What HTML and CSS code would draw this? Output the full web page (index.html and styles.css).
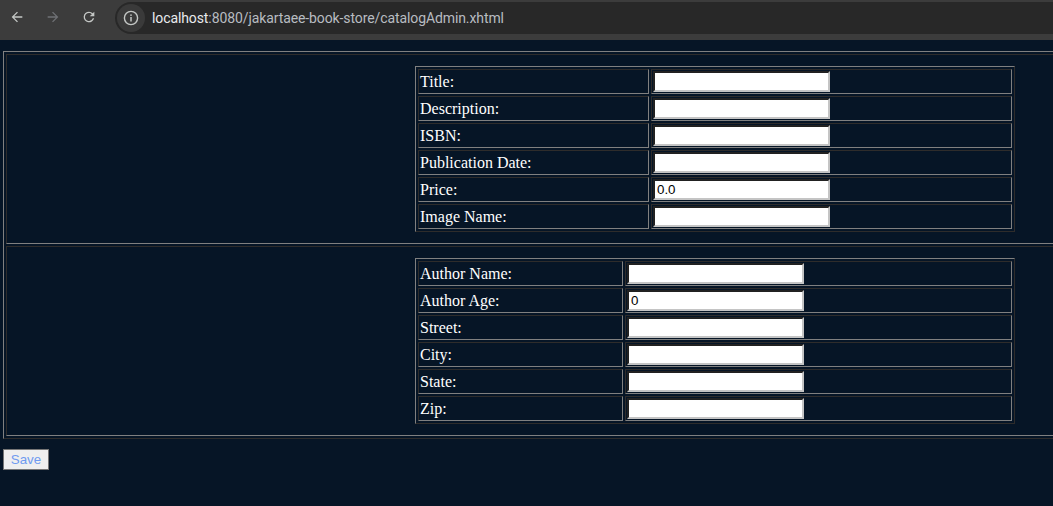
FILE: index.html
```html
<!DOCTYPE html>
<html lang="en">
<head>
<meta charset="utf-8">
<title>catalogAdmin</title>
<link rel="stylesheet" href="styles.css">
</head>
<body>
<div class="chrome">
  <div class="nav">
    <span class="navbtn">
      <svg width="16" height="16" viewBox="0 0 24 24"><path d="M20 11H7.83l5.59-5.59L12 4l-8 8 8 8 1.41-1.41L7.83 13H20v-2z" fill="#c4c7c5"/></svg>
    </span>
    <span class="navbtn">
      <svg width="16" height="16" viewBox="0 0 24 24"><path d="M12 4l-1.41 1.41L16.17 11H4v2h12.17l-5.58 5.59L12 20l8-8z" fill="#6f7175"/></svg>
    </span>
    <span class="navbtn">
      <svg width="16" height="16" viewBox="0 0 24 24"><path d="M17.65 6.35A7.958 7.958 0 0 0 12 4a8 8 0 1 0 7.73 10h-2.08A6 6 0 1 1 12 6c1.66 0 3.14.69 4.22 1.78L13 11h7V4l-2.35 2.35z" fill="#c4c7c5"/></svg>
    </span>
  </div>
  <div class="omnibox">
    <span class="chip">
      <svg width="16" height="16" viewBox="0 0 16 16"><circle cx="8" cy="8" r="6.6" fill="none" stroke="#c4c7c5" stroke-width="1.4"/><rect x="7.25" y="7" width="1.5" height="4.5" fill="#c4c7c5"/><rect x="7.25" y="4.4" width="1.5" height="1.5" fill="#c4c7c5"/></svg>
    </span>
    <span class="url"><span class="host">localhost</span><span class="path">:8080/jakartaee-book-store/catalogAdmin.xhtml</span></span>
  </div>
</div>
<main class="page">
  <form class="form">
    <table class="grid outer">
      <tr>
        <td class="outer-cell">
          <table class="grid inner book">
            <tr><td class="label">Title:</td><td class="value"><input class="field" type="text"></td></tr>
            <tr><td class="label">Description:</td><td class="value"><input class="field" type="text"></td></tr>
            <tr><td class="label">ISBN:</td><td class="value"><input class="field" type="text"></td></tr>
            <tr><td class="label">Publication Date:</td><td class="value"><input class="field" type="text"></td></tr>
            <tr><td class="label">Price:</td><td class="value"><input class="field" type="text" value="0.0"></td></tr>
            <tr><td class="label">Image Name:</td><td class="value"><input class="field" type="text"></td></tr>
          </table>
        </td>
      </tr>
      <tr>
        <td class="outer-cell">
          <table class="grid inner author">
            <tr><td class="label">Author Name:</td><td class="value"><input class="field" type="text"></td></tr>
            <tr><td class="label">Author Age:</td><td class="value"><input class="field" type="text" value="0"></td></tr>
            <tr><td class="label">Street:</td><td class="value"><input class="field" type="text"></td></tr>
            <tr><td class="label">City:</td><td class="value"><input class="field" type="text"></td></tr>
            <tr><td class="label">State:</td><td class="value"><input class="field" type="text"></td></tr>
            <tr><td class="label">Zip:</td><td class="value"><input class="field" type="text"></td></tr>
          </table>
        </td>
      </tr>
    </table>
    <button class="save" type="button">Save</button>
  </form>
</main>
</body>
</html>
```

FILE: styles.css
```css
html, body {
  margin: 0;
  padding: 0;
  overflow: hidden;
  background: #061526;
  height: 100%;
}

.chrome {
  height: 40px;
  background: #3c3c3c;
  display: flex;
  align-items: flex-start;
  font-family: Roboto, "Noto Sans", "Liberation Sans", sans-serif;
}

.nav {
  display: flex;
  padding-top: 1px;
  padding-left: 1px;
}

.navbtn {
  width: 32px;
  height: 32px;
  margin-right: 4px;
  display: flex;
  align-items: center;
  justify-content: center;
}

.omnibox {
  margin-left: 6px;
  margin-top: 2px;
  height: 32px;
  flex: 1;
  background: #282828;
  border-radius: 16px 0 0 16px;
  display: flex;
  align-items: center;
}

.chip {
  width: 28px;
  height: 28px;
  margin-left: 2px;
  border-radius: 50%;
  background: #3a3a3a;
  display: flex;
  align-items: center;
  justify-content: center;
}

.url {
  margin-left: 7px;
  font-size: 14px;
  letter-spacing: -0.1px;
  white-space: nowrap;
}

.host { color: #e8eaed; }
.path { color: #b8bcc1; }

.page {
  padding: 11px 0 0 3px;
}

.form {
  margin: 0;
}

.grid {
  border-collapse: separate;
  border-spacing: 2px;
  border: 1px solid;
  border-color: #808080 #2e2c2b #2e2c2b #808080;
}

.grid td {
  border: 1px solid;
  border-color: #2e2c2b #808080 #808080 #2e2c2b;
  padding: 1px;
}

.outer {
  width: 1424px;
}

.outer > tbody > tr > .outer-cell {
  padding: 1px;
}

.inner {
  width: 600px;
  margin: 10px auto;
}

.label {
  font-family: "Liberation Serif", "Times New Roman", serif;
  font-size: 16px;
  color: #ffffff;
  vertical-align: middle;
  white-space: nowrap;
}

.value {
  vertical-align: middle;
}

.book .label { width: 227px; }
.book .value { width: 357px; }
.author .label { width: 201px; }
.author .value { width: 383px; }

.field {
  display: block;
  box-sizing: border-box;
  width: 177px;
  height: 21px;
  margin: 0;
  padding: 1px 2px;
  border: 2px inset #767676;
  border-color: #767676 #c4c4c4 #c4c4c4 #767676;
  background: #ffffff;
  color: #000000;
  font-family: "Liberation Sans", Arial, sans-serif;
  font-size: 13.333px;
}

.save {
  display: block;
  margin-top: 10px;
  box-sizing: border-box;
  width: 46px;
  height: 21px;
  padding: 0 6px;
  background: #efefef;
  border: 1px solid #767676;
  border-radius: 0;
  color: #6f9bf0;
  font-family: "Liberation Sans", Arial, sans-serif;
  font-size: 13.333px;
}
```
